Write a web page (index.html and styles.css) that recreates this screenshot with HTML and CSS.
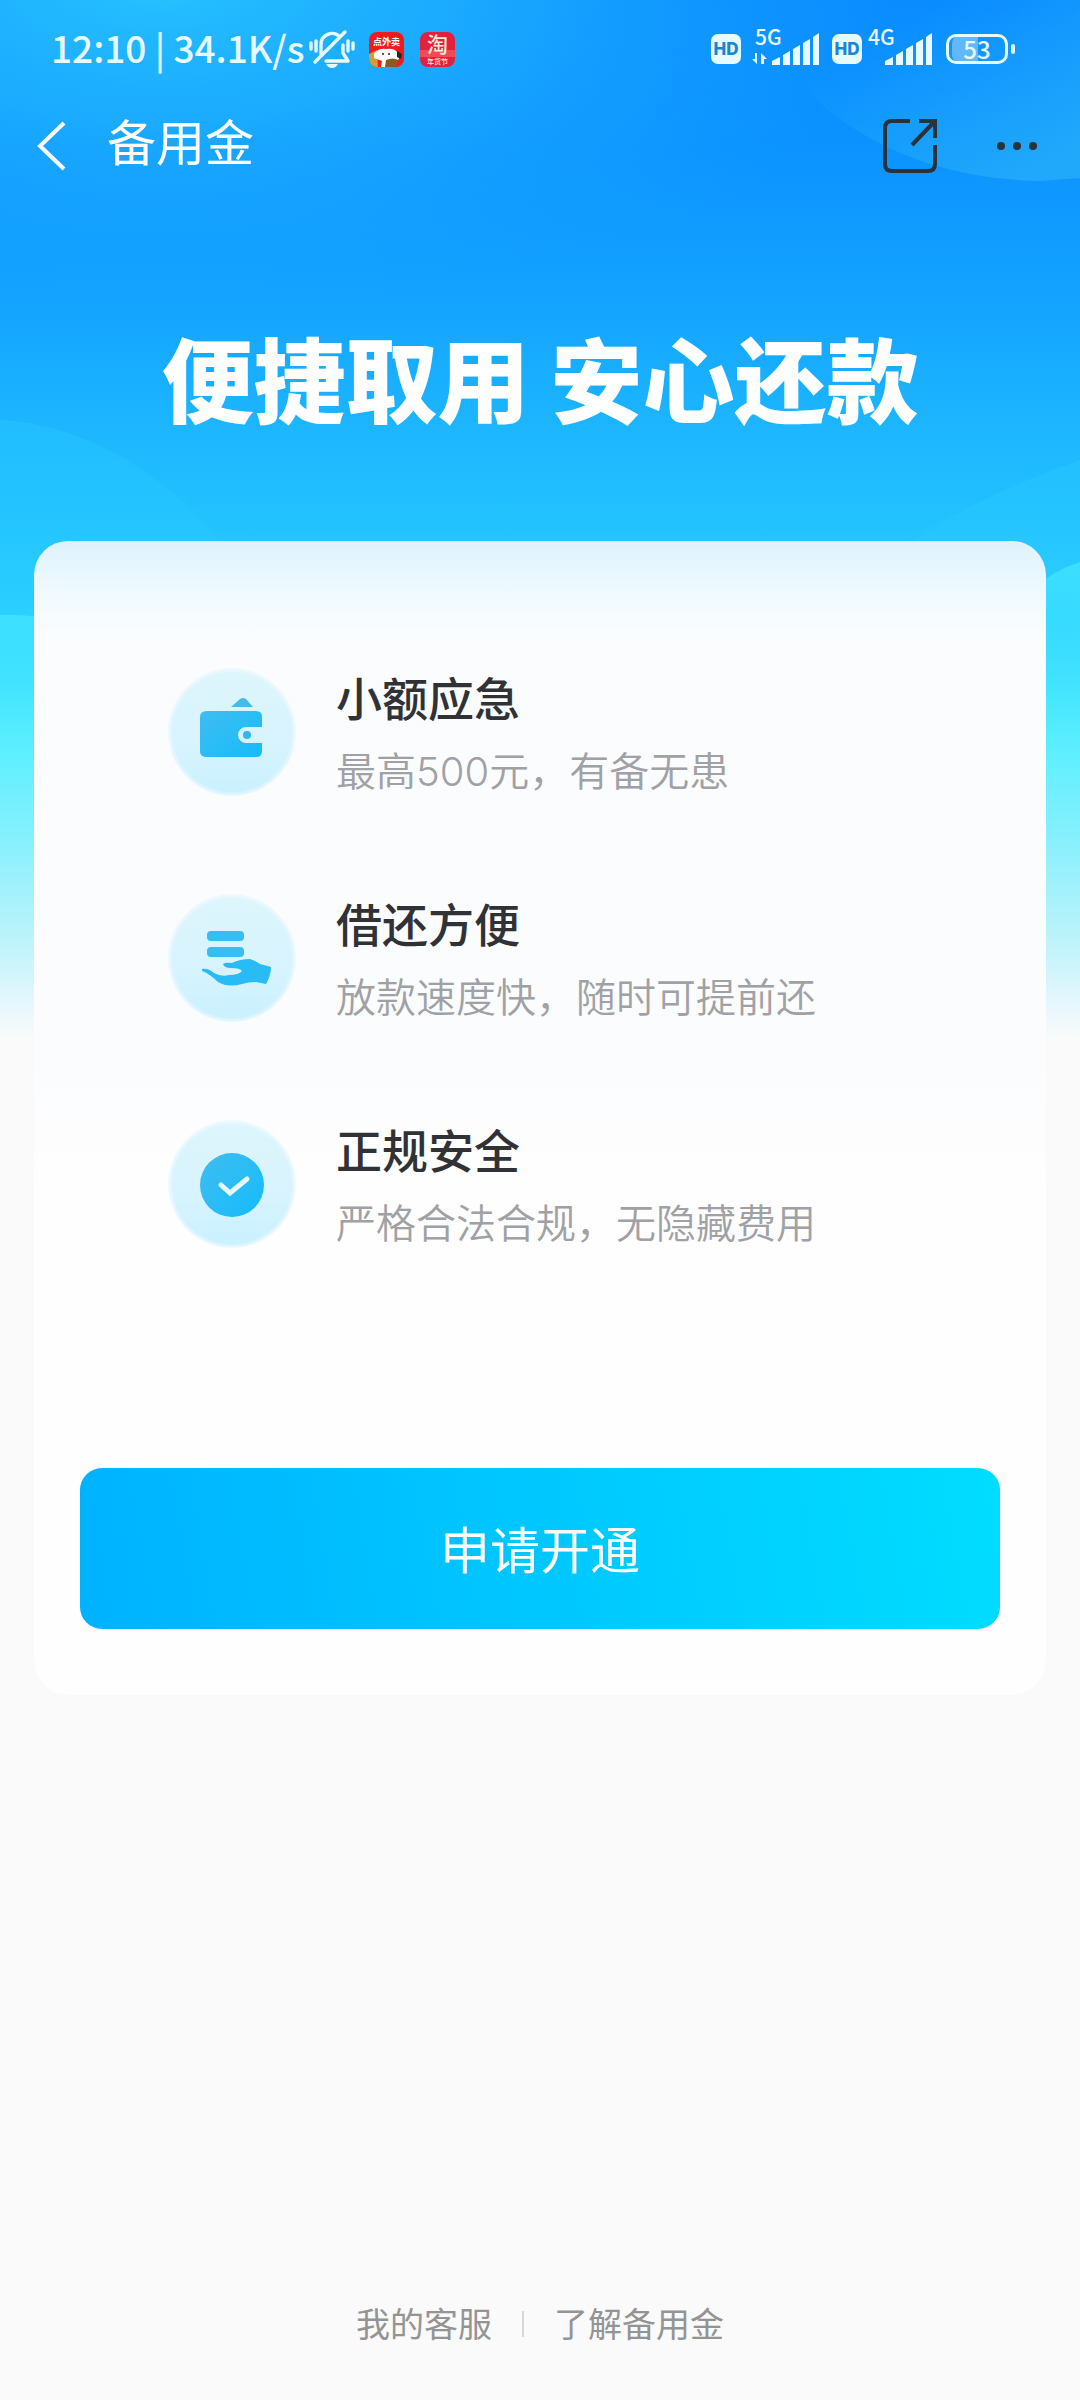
FILE: index.html
```html
<!DOCTYPE html>
<html lang="zh-CN">
<head>
<meta charset="utf-8">
<meta name="viewport" content="width=device-width, initial-scale=1">
<title>备用金</title>
<link rel="stylesheet" href="styles.css">
</head>
<body>
<div class="page">
  <svg class="backdrop" viewBox="0 0 1080 1060" preserveAspectRatio="none" aria-hidden="true">
    <defs>
      <linearGradient id="sky" x1="0" y1="0" x2="0" y2="1">
        <stop offset="0" stop-color="#0a8cff"/>
        <stop offset=".14" stop-color="#0c93ff"/>
        <stop offset=".28" stop-color="#13a3ff"/>
        <stop offset=".42" stop-color="#1eb8ff"/>
        <stop offset=".5" stop-color="#23c3ff"/>
        <stop offset=".58" stop-color="#2bd0ff"/>
        <stop offset=".66" stop-color="#48e7ff"/>
        <stop offset=".71" stop-color="#5eefff"/>
        <stop offset=".8" stop-color="#8cf0fc"/>
        <stop offset=".9" stop-color="#c6f3fa"/>
        <stop offset=".95" stop-color="#e8f7fd"/>
        <stop offset=".98" stop-color="#fafafa"/>
      </linearGradient>
      <radialGradient id="glow" gradientUnits="userSpaceOnUse" cx="160" cy="-40" r="740" gradientTransform="scale(1 .46)">
        <stop offset="0" stop-color="#27c2ff"/>
        <stop offset=".4" stop-color="#20b4ff" stop-opacity=".75"/>
        <stop offset="1" stop-color="#16a4ff" stop-opacity="0"/>
      </radialGradient>
      <linearGradient id="wave" x1="0" y1="0" x2="0" y2="1">
        <stop offset="0" stop-color="#2fd6ff" stop-opacity=".24"/>
        <stop offset="1" stop-color="#2fd6ff" stop-opacity=".05"/>
      </linearGradient>
      <linearGradient id="shallow" x1="0" y1="0" x2="0" y2="1">
        <stop offset="0" stop-color="#44e6ff" stop-opacity=".75"/>
        <stop offset="1" stop-color="#44e6ff" stop-opacity="0"/>
      </linearGradient>
      <linearGradient id="corner" x1="0" y1="0" x2="1" y2="1">
        <stop offset=".3" stop-color="#20a8fb" stop-opacity="0"/>
        <stop offset=".9" stop-color="#20a8fb"/>
      </linearGradient>
    </defs>
    <rect width="1080" height="1060" fill="url(#sky)"/>
    <rect width="920" height="330" fill="url(#glow)"/>
    <path d="M750 0C780 90 880 178 1040 181L1080 178V0Z" fill="url(#corner)"/>
    <path d="M0 420C90 424 170 480 220 541V620H0Z" fill="url(#wave)"/>
    <path d="M1080 460C1010 485 950 515 910 541V620H1080Z" fill="url(#wave)"/>
    <path d="M0 615Q40 614 60 622V720H0Z" fill="url(#shallow)"/>
    <path d="M1080 562Q1055 570 1030 590V720H1080Z" fill="url(#shallow)"/>
  </svg>

  <header class="status">
    <div class="status-group">
      <span class="clock">12:10 | 34.1K/s</span>
      <svg class="bell" viewBox="0 0 46 40" aria-hidden="true">
        <g fill="none" stroke="#e6faff" stroke-width="3.4" stroke-linecap="round" stroke-linejoin="round">
          <path d="M12 25V16a11 11 0 0 1 19-8M34 16v8l5 8H17M6 33 36 3"/>
          <path d="M2 14v6M7 12v10M39 12v10M44 14v6"/>
        </g>
        <path d="M17 35h12q-2 4-6 4t-6-4z" fill="#e6faff"/>
      </svg>
      <svg class="app" viewBox="0 0 35 35" aria-hidden="true">
        <defs><clipPath id="tile"><rect width="35" height="35" rx="8"/></clipPath></defs>
        <g clip-path="url(#tile)">
          <rect width="35" height="35" fill="#ee1c1d"/>
          <path d="M0 22 8 18 9 35H0z" fill="#d99a3c"/>
          <path d="M5 22q4-6 12-5 8-1 11 3l4 3-3 5-5 1-3 6H12l1-6-8-3z" fill="#fff"/>
          <path d="M28 19l5 3-1 5-4-2z" fill="#33211c"/>
          <path d="M17 28q7-3 12 0l-2 7H16z" fill="#8a5a20"/>
          <circle cx="14" cy="22" r="1" fill="#222"/><circle cx="20" cy="22" r="1" fill="#222"/>
          <text x="4" y="13" font-size="9" font-weight="700" fill="#fff">点外卖</text>
        </g>
      </svg>
      <svg class="app" viewBox="0 0 35 35" aria-hidden="true">
        <rect width="35" height="35" rx="8" fill="#e0213f"/>
        <path d="M0 18h35v7H0z" fill="#f04a55"/>
        <text x="7" y="20" font-size="21" font-weight="500" fill="#ffe9d6">淘</text>
        <text x="7" y="32" font-size="7" font-weight="500" fill="#ffe9d6">年货节</text>
      </svg>
    </div>
    <div class="status-group status-right">
      <div class="sim">
        <span class="hd">HD</span>
        <svg class="signal" width="72" height="38" viewBox="0 0 72 38" aria-hidden="true">
          <text x="8" y="18" font-size="21">5G</text>
          <path d="M10 26v11L5 32h3v-6zM14 37V26l6 6h-3v5z"/>
          <path d="M25 38v-4l8-4v8zM36 38V28l7-4v14zM46 38V22l7-4v20zM56 38V16l7-4v26zM66 38V10l6-4v32z"/>
        </svg>
      </div>
      <div class="sim">
        <span class="hd">HD</span>
        <svg class="signal" width="65" height="38" viewBox="0 0 65 38" aria-hidden="true">
          <text x="0" y="18" font-size="21">4G</text>
          <path d="M17 38v-4l8-4v8zM28 38V28l7-4v14zM38 38V22l7-4v20zM48 38V16l7-4v26zM58 38V10l6-4v32z"/>
        </svg>
      </div>
      <span class="battery">53</span>
    </div>
  </header>

  <nav class="nav">
    <button class="icon-button" aria-label="返回">
      <svg class="back" viewBox="0 0 30 50"><path d="M28 2 4 25 28 48" fill="none" stroke="#fff" stroke-width="4"/></svg>
    </button>
    <h1 class="title">备用金</h1>
    <button class="icon-button" aria-label="分享">
      <svg class="share" viewBox="0 0 56 56"><path d="M28 3H10Q3 3 3 10V46Q3 53 10 53H46Q53 53 53 46V27M37 3H53V20M53 3 30 27" fill="none" stroke="#2a3238" stroke-width="4"/></svg>
    </button>
    <button class="icon-button" aria-label="更多">
      <svg class="more" viewBox="0 0 42 10" fill="#2a3238"><circle cx="5" cy="5" r="4"/><circle cx="21" cy="5" r="4"/><circle cx="37" cy="5" r="4"/></svg>
    </button>
  </nav>

  <main class="main">
    <h2 class="slogan">便捷取用 安心还款</h2>
    <section class="card">
      <ul class="features">
        <li class="feature">
          <svg class="badge" viewBox="0 0 128 128" aria-hidden="true">
            <defs>
              <linearGradient id="disc" x1="0" y1="0" x2="0" y2="1"><stop offset="0" stop-color="#def6fc"/><stop offset=".6" stop-color="#d7f3fe"/><stop offset="1" stop-color="#c9f1fe"/></linearGradient>
              <radialGradient id="edge"><stop offset=".9" stop-color="#fff"/><stop offset="1" stop-color="#000"/></radialGradient>
              <mask id="soft"><circle cx="64" cy="64" r="66" fill="url(#edge)"/></mask>
              <linearGradient id="ink" x1="0" y1="0" x2="1" y2="1"><stop offset="0" stop-color="#40bdf0"/><stop offset="1" stop-color="#14bcfb"/></linearGradient>
            </defs>
            <circle cx="64" cy="64" r="64" fill="url(#disc)" mask="url(#soft)"/>
            <path d="M63 39 72 31Q75 29 78 31L85 39Z" fill="#42bdea"/>
            <path d="M39 43H88Q94 43 94 49V59H78A8 8 0 0 0 78 75H94V83Q94 89 88 89H39Q32 89 32 83V49Q32 43 39 43Z" fill="url(#ink)"/>
            <circle cx="79" cy="67" r="4" fill="#35b5ea"/>
          </svg>
          <div class="feature-text"><h3>小额应急</h3><p>最高500元，有备无患</p></div>
        </li>
        <li class="feature">
          <svg class="badge" viewBox="0 0 128 128" aria-hidden="true">
            <circle cx="64" cy="64" r="64" fill="url(#disc)" mask="url(#soft)"/>
            <rect x="39" y="37" width="37" height="10" rx="4" fill="#35bdf4"/>
            <rect x="39" y="53" width="37" height="10" rx="4" fill="#35bdf4"/>
            <path d="M34 75Q40 74 46 79 53 83 61 81 71 81 74 77 72 74 63 74 56 74 55 70 57 68 64 69 72 65 82 65 88 67 92 70L103 73Q103 81 98 90L88 88Q80 88 74 90 60 94 50 88 42 80 34 77Z" fill="#28bbf6"/>
          </svg>
          <div class="feature-text"><h3>借还方便</h3><p>放款速度快，随时可提前还</p></div>
        </li>
        <li class="feature">
          <svg class="badge" viewBox="0 0 128 128" aria-hidden="true">
            <circle cx="64" cy="64" r="64" fill="url(#disc)" mask="url(#soft)"/>
            <circle cx="64" cy="65" r="32" fill="url(#ink)"/>
            <path d="M53 65 62 73 79 59" fill="none" stroke="#e6faff" stroke-width="5" stroke-linecap="round"/>
          </svg>
          <div class="feature-text"><h3>正规安全</h3><p>严格合法合规，无隐藏费用</p></div>
        </li>
      </ul>
      <button class="apply">申请开通</button>
    </section>
  </main>

  <footer class="footer">
    <a href="#service">我的客服</a>
    <a href="#about">了解备用金</a>
  </footer>
</div>
</body>
</html>
```
FILE: styles.css
```css
* {
  box-sizing: border-box;
  margin: 0;
  padding: 0;
}

body {
  font-family: "Noto Sans CJK SC", sans-serif;
  background: #fafafa;
  color: #303236;
}

button {
  border: 0;
  background: none;
  font-family: inherit;
  cursor: pointer;
}

.page {
  position: relative;
  display: flex;
  flex-direction: column;
  min-height: 100vh;
  isolation: isolate;
}

.backdrop {
  position: absolute;
  inset: 0 0 auto;
  z-index: -1;
  width: 100%;
  height: 1060px;
}

/* Status bar */
.status {
  display: flex;
  justify-content: space-between;
  align-items: center;
  height: 98px;
  padding: 0 72px 0 51px;
  color: #e6faff;
}

.status-group,
.sim {
  display: flex;
  align-items: center;
}

.clock {
  padding-bottom: 4px;
  font: 500 37px/48px "Noto Sans CJK SC", sans-serif;
  white-space: nowrap;
}

.bell {
  width: 46px;
  height: 40px;
  margin: 0 14px 0 4px;
}

.app {
  width: 35px;
  height: 35px;
  margin-right: 16px;
  overflow: visible;
}

.status-right {
  gap: 13px;
}

.sim {
  gap: 6px;
}

.hd {
  width: 30px;
  border-radius: 7px;
  background: #e6faff;
  color: #1686d8;
  font: 800 17px/30px Inter, sans-serif;
  text-align: center;
}

.signal {
  margin-bottom: 6px;
  overflow: visible;
  fill: #e6faff;
  font-weight: 500;
}

.battery {
  position: relative;
  width: 62px;
  padding: 0 3px;
  border: 3px solid #e6faff;
  border-radius: 10px;
  background: linear-gradient(90deg, #62b8ff 53%, transparent 53%) content-box;
  font: 500 24px/24px "Noto Sans CJK SC", sans-serif;
  text-align: center;
}

.battery::after {
  content: "";
  position: absolute;
  top: 7px;
  right: -10px;
  width: 4px;
  height: 10px;
  border-radius: 2px;
  background: #e6faff;
}

/* Navigation */
.nav {
  display: flex;
  align-items: center;
  height: 96px;
  padding: 0 42px 0 36px;
}

.icon-button svg {
  display: block;
}

.back {
  width: 30px;
  height: 50px;
}

.title {
  flex: 1;
  margin-left: 41px;
  padding-bottom: 12px;
  color: #fff;
  font-size: 49px;
  font-weight: 400;
  line-height: 60px;
}

.share {
  width: 56px;
  height: 56px;
}

.more {
  width: 42px;
  height: 10px;
  margin-left: 58px;
}

/* Content */
.main {
  padding: 126px 34px 0;
}

.slogan {
  height: 221px;
  color: #fff;
  font-size: 92px;
  font-weight: 900;
  line-height: 112px;
  text-align: center;
  white-space: nowrap;
}

.card {
  padding: 116px 46px 66px;
  border-radius: 34px;
  background: linear-gradient(#def2fd, #effafe 50px, #fbfcfe 96px, #fbfcfe 500px, #fefefe 640px);
}

.features {
  display: grid;
  gap: 66px;
  padding-left: 88px;
  list-style: none;
}

.feature {
  display: flex;
  gap: 40px;
  height: 160px;
}

.badge {
  flex: none;
  width: 128px;
  height: 128px;
  margin-top: 11px;
}

.feature-text h3 {
  font-size: 46px;
  font-weight: 500;
  line-height: 78px;
}

.feature-text p {
  color: #a0a1a4;
  font-family: Inter, "Noto Sans CJK SC", sans-serif;
  font-size: 40px;
  font-weight: 350;
  line-height: 74px;
}

.apply {
  display: block;
  width: 100%;
  height: 161px;
  margin-top: 199px;
  padding-bottom: 4px;
  border-radius: 22px;
  background: linear-gradient(80deg, #00b2ff, #00ddff);
  color: #fff;
  font-size: 50px;
  font-weight: 400;
}

/* Footer */
.footer {
  display: flex;
  justify-content: center;
  align-items: center;
  margin-top: auto;
  padding-bottom: 52px;
}

.footer a {
  color: #949494;
  font-size: 34px;
  line-height: 50px;
  text-decoration: none;
}

.footer a + a::before {
  content: "";
  display: inline-block;
  width: 2px;
  height: 26px;
  margin: 0 30px;
  background: #d8d8d8;
}
```
